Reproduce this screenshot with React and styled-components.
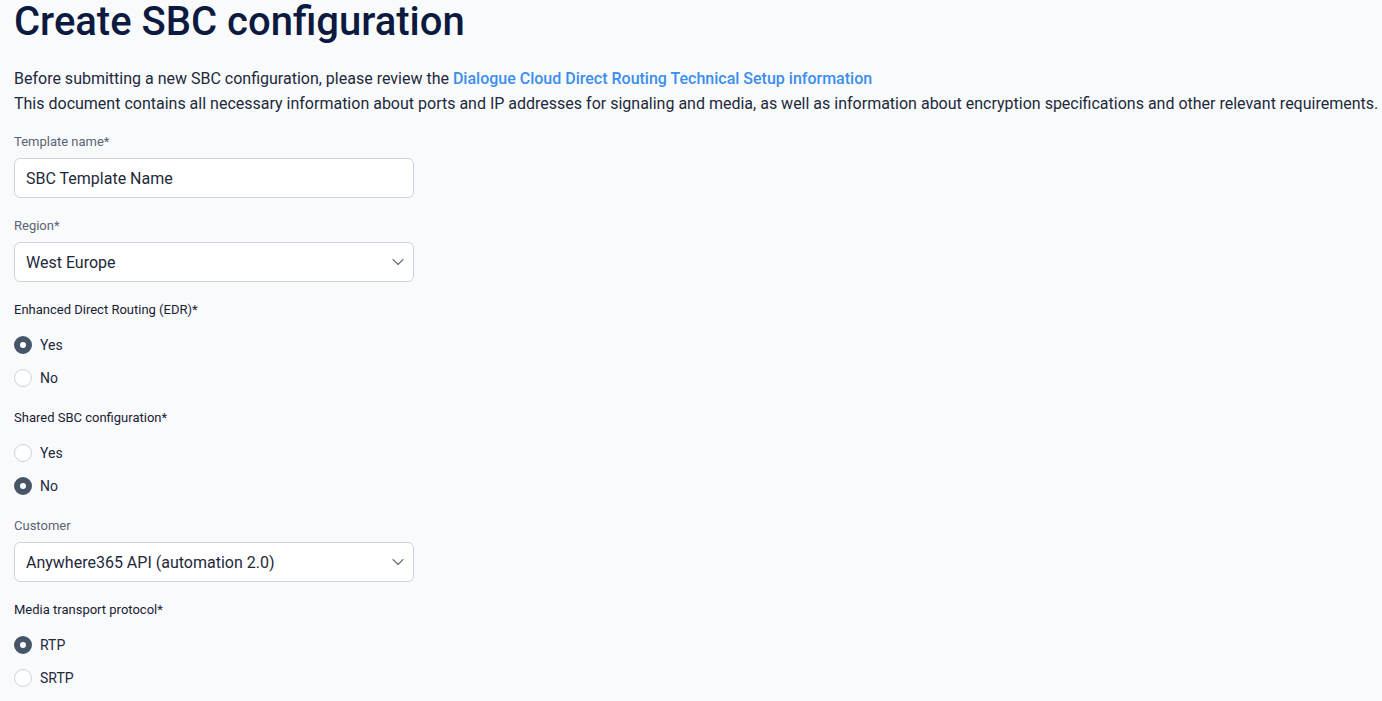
import React, { useState } from "react"
import styled, { createGlobalStyle } from "styled-components"

const GlobalStyle = createGlobalStyle`
  * { box-sizing: border-box; }
  html, body {
    margin: 0;
    padding: 0;
    background: #f8fafc;
    font-family: Roboto, "Liberation Sans", Arial, sans-serif;
  }
`

const Page = styled.div`
  padding: 0 14px;
  min-height: 701px;
  background: #f8fafc;
`

const Title = styled.h1`
  margin: 0;
  font-size: 40px;
  line-height: 44px;
  font-weight: 500;
  color: #0b1a3e;
`

const Intro = styled.div`
  margin: 22px 0 18px;
  font-size: 16px;
  line-height: 25px;
  color: #1e293b;
`

const Line = styled.p`
  margin: 0;
  white-space: nowrap;
`

const Link = styled.a`
  color: #3b8eee;
  font-weight: 500;
  text-decoration: none;
`

const Form = styled.form`
  display: flex;
  flex-direction: column;
  gap: 20px;
`

const Field = styled.div`
  display: flex;
  flex-direction: column;
  gap: ${(p) => (p.$radio ? "15px" : "8px")};
`

const Label = styled.label`
  font-size: 13px;
  line-height: 16px;
  color: ${(p) => (p.$strong ? "#1a2233" : "#5b6472")};
`

const Input = styled.input`
  width: 400px;
  height: 40px;
  padding: 0 11px;
  border: 1px solid #cdd3dc;
  border-radius: 6px;
  background: #fff;
  font-family: inherit;
  font-size: 16px;
  color: #1e293b;
  outline: none;
`

const SelectWrap = styled.div`
  position: relative;
  width: 400px;
`

const Select = styled.select`
  appearance: none;
  width: 100%;
  height: 40px;
  padding: 0 36px 0 11px;
  border: 1px solid #cdd3dc;
  border-radius: 6px;
  background: #fff;
  font-family: inherit;
  font-size: 16px;
  color: #1e293b;
  outline: none;
`

const Chevron = styled.svg`
  position: absolute;
  right: 6px;
  top: 10px;
  pointer-events: none;
`

const Options = styled.div`
  display: flex;
  flex-direction: column;
  gap: 9px;
`

const Option = styled.label`
  display: flex;
  align-items: center;
  gap: 8px;
  height: 24px;
  font-size: 14px;
  color: #1e293b;
  cursor: pointer;
`

const Radio = styled.input`
  appearance: none;
  margin: 0;
  width: 18px;
  height: 18px;
  border-radius: 50%;
  border: 1px solid #cdd3dc;
  background: #fff;
  cursor: pointer;

  &:checked {
    border: 6px solid #475569;
    background: #fff;
  }
`

function SelectField ({ label, value, options }) {
  return (
    <Field>
      <Label>{label}</Label>
      <SelectWrap>
        <Select defaultValue={value}>
          {options.map((o) => (
            <option key={o}>{o}</option>
          ))}
        </Select>
        <Chevron width="20" height="20" viewBox="0 0 24 24" fill="none" stroke="#6b7280" strokeWidth="1.4" strokeLinecap="round" strokeLinejoin="round">
          <path d="m6 9 6 6 6-6" />
        </Chevron>
      </SelectWrap>
    </Field>
  )
}

function RadioField ({ label, name, options, value, onChange }) {
  return (
    <Field $radio>
      <Label $strong>{label}</Label>
      <Options>
        {options.map((o) => (
          <Option key={o}>
            <Radio
              type="radio"
              name={name}
              checked={value === o}
              onChange={() => onChange(o)}
            />
            {o}
          </Option>
        ))}
      </Options>
    </Field>
  )
}

function App () {
  const [edr, setEdr] = useState("Yes")
  const [shared, setShared] = useState("No")
  const [media, setMedia] = useState("RTP")

  return (
    <Page>
      <GlobalStyle />
      <Title>Create SBC configuration</Title>
      <Intro>
        <Line>
          Before submitting a new SBC configuration, please review the{" "}
          <Link href="#">Dialogue Cloud Direct Routing Technical Setup information</Link>
        </Line>
        <Line>
          This document contains all necessary information about ports and IP addresses for signaling and media, as well as information about encryption specifications and other relevant requirements.
        </Line>
      </Intro>
      <Form onSubmit={(e) => e.preventDefault()}>
        <Field>
          <Label>Template name*</Label>
          <Input defaultValue="SBC Template Name" />
        </Field>
        <SelectField
          label="Region*"
          value="West Europe"
          options={["West Europe", "North Europe", "East US"]}
        />
        <RadioField
          label="Enhanced Direct Routing (EDR)*"
          name="edr"
          options={["Yes", "No"]}
          value={edr}
          onChange={setEdr}
        />
        <RadioField
          label="Shared SBC configuration*"
          name="shared"
          options={["Yes", "No"]}
          value={shared}
          onChange={setShared}
        />
        <SelectField
          label="Customer"
          value="Anywhere365 API (automation 2.0)"
          options={["Anywhere365 API (automation 2.0)"]}
        />
        <RadioField
          label="Media transport protocol*"
          name="media"
          options={["RTP", "SRTP"]}
          value={media}
          onChange={setMedia}
        />
      </Form>
    </Page>
  )
}

export default App
